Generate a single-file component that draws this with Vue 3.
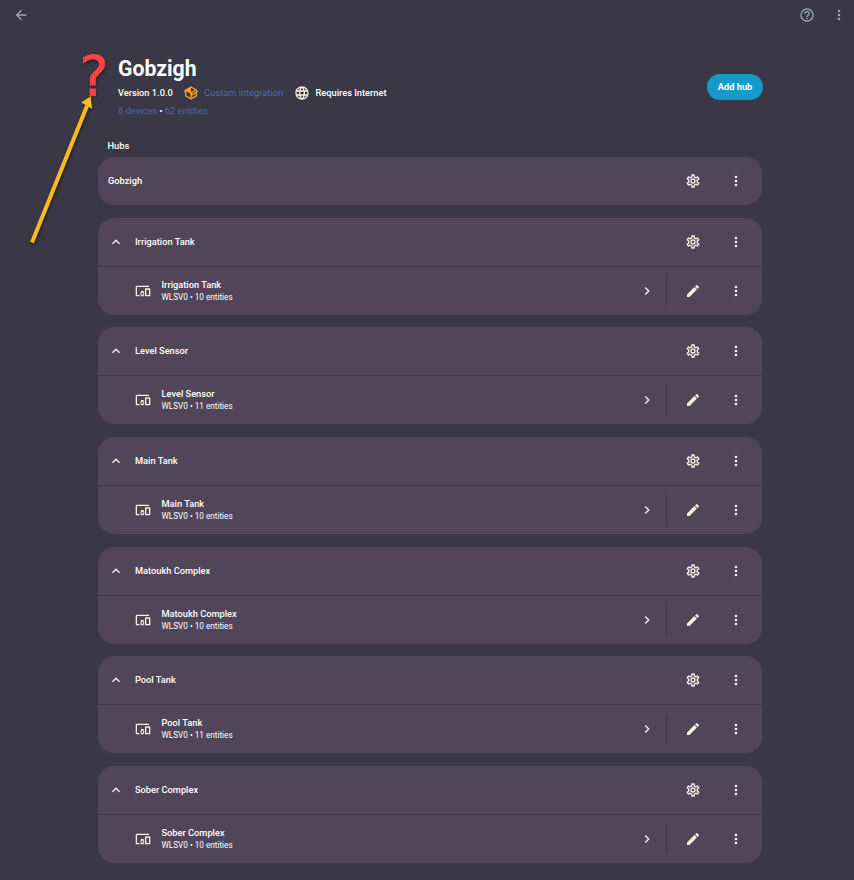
<script setup>
const icons = {
  back: 'M20,11V13H8L13.5,18.5L12.08,19.92L4.16,12L12.08,4.08L13.5,5.5L8,11H20Z',
  help: 'M11,18H13V16H11V18M12,2A10,10 0 0,0 2,12A10,10 0 0,0 12,22A10,10 0 0,0 22,12A10,10 0 0,0 12,2M12,20C7.59,20 4,16.41 4,12C4,7.59 7.59,4 12,4C16.41,4 20,7.59 20,12C20,16.41 16.41,20 12,20M12,6A4,4 0 0,0 8,10H10A2,2 0 0,1 12,8A2,2 0 0,1 14,10C14,12 11,11.75 11,15H13C13,12.75 16,12.5 16,10A4,4 0 0,0 12,6Z',
  dots: 'M12,16A2,2 0 0,1 14,18A2,2 0 0,1 12,20A2,2 0 0,1 10,18A2,2 0 0,1 12,16M12,10A2,2 0 0,1 14,12A2,2 0 0,1 12,14A2,2 0 0,1 10,12A2,2 0 0,1 12,10M12,4A2,2 0 0,1 14,6A2,2 0 0,1 12,8A2,2 0 0,1 10,6A2,2 0 0,1 12,4Z',
  cog: 'M12,8A4,4 0 0,1 16,12A4,4 0 0,1 12,16A4,4 0 0,1 8,12A4,4 0 0,1 12,8M12,10A2,2 0 0,0 10,12A2,2 0 0,0 12,14A2,2 0 0,0 14,12A2,2 0 0,0 12,10M10,22C9.75,22 9.54,21.82 9.5,21.58L9.13,18.93C8.5,18.68 7.96,18.34 7.44,17.94L4.95,18.95C4.73,19.03 4.46,18.95 4.34,18.73L2.34,15.27C2.21,15.05 2.27,14.78 2.46,14.63L4.57,12.97L4.5,12L4.57,11L2.46,9.37C2.27,9.22 2.21,8.95 2.34,8.73L4.34,5.27C4.46,5.05 4.73,4.96 4.95,5.05L7.44,6.05C7.96,5.66 8.5,5.32 9.13,5.07L9.5,2.42C9.54,2.18 9.75,2 10,2H14C14.25,2 14.46,2.18 14.5,2.42L14.87,5.07C15.5,5.32 16.04,5.66 16.56,6.05L19.05,5.05C19.27,4.96 19.54,5.05 19.66,5.27L21.66,8.73C21.79,8.95 21.73,9.22 21.54,9.37L19.43,11L19.5,12L19.43,13L21.54,14.63C21.73,14.78 21.79,15.05 21.66,15.27L19.66,18.73C19.54,18.95 19.27,19.04 19.05,18.95L16.56,17.95C16.04,18.34 15.5,18.68 14.87,18.93L14.5,21.58C14.46,21.82 14.25,22 14,22H10M11.25,4L10.88,6.61C9.68,6.86 8.62,7.5 7.85,8.39L5.44,7.35L4.69,8.65L6.8,10.2C6.4,11.37 6.4,12.64 6.8,13.8L4.68,15.36L5.43,16.66L7.86,15.62C8.63,16.5 9.68,17.14 10.87,17.38L11.24,20H12.76L13.13,17.39C14.32,17.14 15.37,16.5 16.14,15.62L18.57,16.66L19.32,15.36L17.2,13.81C17.6,12.64 17.6,11.37 17.2,10.2L19.31,8.65L18.56,7.35L16.15,8.39C15.38,7.5 14.32,6.86 13.12,6.62L12.75,4H11.25Z',
  pencil: 'M20.71,7.04C21.1,6.65 21.1,6 20.71,5.63L18.37,3.29C18,2.9 17.35,2.9 16.96,3.29L15.12,5.12L18.87,8.87M3,17.25V21H6.75L17.81,9.93L14.06,6.18L3,17.25Z',
  up: 'M7.41,15.41L12,10.83L16.59,15.41L18,14L12,8L6,14L7.41,15.41Z',
  right: 'M8.59,16.58L13.17,12L8.59,7.41L10,6L16,12L10,18L8.59,16.58Z',
  devices: 'M3 6H21V4H3C1.9 4 1 4.9 1 6V18C1 19.1 1.9 20 3 20H7V18H3V6M13 12H9V13.78C8.39 14.33 8 15.11 8 16C8 16.89 8.39 17.67 9 18.22V20H13V18.22C13.61 17.67 14 16.88 14 16S13.61 14.33 13 13.78V12M11 17.5C10.17 17.5 9.5 16.83 9.5 16S10.17 14.5 11 14.5 12.5 15.17 12.5 16 11.83 17.5 11 17.5M22 8H16C15.5 8 15 8.5 15 9V19C15 19.5 15.5 20 16 20H22C22.5 20 23 19.5 23 19V9C23 8.5 22.5 8 22 8M21 18H17V10H21V18Z',
  web: 'M16.36,14C16.44,13.34 16.5,12.68 16.5,12C16.5,11.32 16.44,10.66 16.36,10H19.74C19.9,10.64 20,11.31 20,12C20,12.69 19.9,13.36 19.74,14M14.59,19.56C15.19,18.45 15.65,17.25 15.97,16H18.92C17.96,17.65 16.43,18.93 14.59,19.56M14.34,14H9.66C9.56,13.34 9.5,12.68 9.5,12C9.5,11.32 9.56,10.65 9.66,10H14.34C14.43,10.65 14.5,11.32 14.5,12C14.5,12.68 14.43,13.34 14.34,14M12,19.96C11.17,18.76 10.5,17.43 10.09,16H13.91C13.5,17.43 12.83,18.76 12,19.96M8,8H5.08C6.03,6.34 7.57,5.06 9.4,4.44C8.8,5.55 8.35,6.75 8,8M5.08,16H8C8.35,17.25 8.8,18.45 9.4,19.56C7.57,18.93 6.03,17.65 5.08,16M4.26,14C4.1,13.36 4,12.69 4,12C4,11.31 4.1,10.64 4.26,10H7.64C7.56,10.66 7.5,11.32 7.5,12C7.5,12.68 7.56,13.34 7.64,14M12,4.03C12.83,5.23 13.5,6.57 13.91,8H10.09C10.5,6.57 11.17,5.23 12,4.03M18.92,8H15.97C15.65,6.75 15.19,5.55 14.59,4.44C16.43,5.07 17.96,6.34 18.92,8M12,2C6.47,2 2,6.5 2,12A10,10 0 0,0 12,22A10,10 0 0,0 22,12A10,10 0 0,0 12,2Z',
  box: 'M2,10.96C1.5,10.68 1.35,10.07 1.63,9.59L3.13,7C3.24,6.8 3.41,6.66 3.6,6.58L11.43,2.18C11.59,2.06 11.79,2 12,2C12.21,2 12.41,2.06 12.57,2.18L20.47,6.62C20.66,6.72 20.82,6.88 20.91,7.08L22.36,9.6C22.64,10.08 22.47,10.69 22,10.96L21,11.54V16.5C21,16.88 20.79,17.21 20.47,17.38L12.57,21.82C12.41,21.94 12.21,22 12,22C11.79,22 11.59,21.94 11.43,21.82L3.53,17.38C3.21,17.21 3,16.88 3,16.5V10.96C2.7,11.13 2.32,11.14 2,10.96M12,4.15V4.15L12,10.85V10.85L17.96,7.5L12,4.15M5,15.91L11,19.29V12.58L5,9.21V15.91M19,15.91V12.69L14,15.59C13.67,15.77 13.3,15.76 13,15.6V19.29L19,15.91M13.85,13.36L20.13,9.73L19.55,8.72L13.27,12.35L13.85,13.36Z'
}

const hubs = [
  { name: 'Irrigation Tank', entities: 10 },
  { name: 'Level Sensor', entities: 11 },
  { name: 'Main Tank', entities: 10 },
  { name: 'Matoukh Complex', entities: 10 },
  { name: 'Pool Tank', entities: 11 },
  { name: 'Sober Complex', entities: 10 }
]
</script>

<template>
  <div class="page">
    <nav class="toolbar">
      <svg class="icon" viewBox="0 0 24 24"><path :d="icons.back" /></svg>
      <span class="spacer"></span>
      <svg class="icon" viewBox="0 0 24 24"><path :d="icons.help" /></svg>
      <svg class="icon" viewBox="0 0 24 24"><path :d="icons.dots" /></svg>
    </nav>

    <main class="content">
      <header class="header">
        <div class="info">
          <h1>Gobzigh</h1>
          <div class="meta">
            <span class="version">Version 1.0.0</span>
            <svg class="icon orange" viewBox="0 0 24 24"><path :d="icons.box" /></svg>
            <a class="link custom">Custom integration</a>
            <svg class="icon" viewBox="0 0 24 24"><path :d="icons.web" /></svg>
            <span class="requires">Requires Internet</span>
          </div>
          <div class="counts"><a class="link">6 devices</a> • <a class="link">62 entities</a></div>
        </div>
        <button class="add">Add hub</button>
      </header>

      <h2>Hubs</h2>

      <div class="cards">
        <section class="card">
          <div class="row root">
            <span class="name">Gobzigh</span>
            <span class="spacer"></span>
            <svg class="icon" viewBox="0 0 24 24"><path :d="icons.cog" /></svg>
            <svg class="icon menu" viewBox="0 0 24 24"><path :d="icons.dots" /></svg>
          </div>
        </section>
        <section v-for="hub in hubs" :key="hub.name" class="card">
          <div class="row">
            <svg class="icon" viewBox="0 0 24 24"><path :d="icons.up" /></svg>
            <span class="name entry">{{ hub.name }}</span>
            <span class="spacer"></span>
            <svg class="icon" viewBox="0 0 24 24"><path :d="icons.cog" /></svg>
            <svg class="icon menu" viewBox="0 0 24 24"><path :d="icons.dots" /></svg>
          </div>
          <div class="row device">
            <svg class="icon" viewBox="0 0 24 24"><path :d="icons.devices" /></svg>
            <div class="labels">
              <span class="name">{{ hub.name }}</span>
              <span class="sub">WLSV0 • {{ hub.entities }} entities</span>
            </div>
            <span class="spacer"></span>
            <svg class="icon" viewBox="0 0 24 24"><path :d="icons.right" /></svg>
            <span class="divider"></span>
            <svg class="icon" viewBox="0 0 24 24"><path :d="icons.pencil" /></svg>
            <svg class="icon menu" viewBox="0 0 24 24"><path :d="icons.dots" /></svg>
          </div>
        </section>
      </div>
    </main>

    <div class="question">?</div>
    <svg class="arrow" viewBox="0 0 120 260">
      <path d="M32 242.500L87 106" />
      <polygon points="90.600,96.300 81.200,102.500 92.200,109" />
    </svg>
  </div>
</template>

<style>
body {
  margin: 0;
  background: #3a3747;
}
</style>

<style scoped>
.page {
  position: relative;
  box-sizing: border-box;
  width: 854px;
  height: 880px;
  overflow: hidden;
  background: #3a3747;
  color: #fff;
  font-family: Roboto, "Liberation Sans", sans-serif;
  font-size: 9.25px;
  font-weight: 500;
}
.icon {
  width: 16px;
  height: 16px;
  flex: none;
  fill: #f8efe3;
}
.spacer {
  flex: 1;
}
.toolbar {
  display: flex;
  align-items: center;
  gap: 16px;
  height: 30px;
  padding: 0 7px 0 13px;
}
.toolbar .icon {
  fill: #9aa9bc;
}
.content {
  width: 664px;
  margin-left: 98px;
}
.header {
  display: flex;
  align-items: center;
  justify-content: space-between;
  height: 94px;
  padding-left: 20px;
  box-sizing: border-box;
}
.info {
  padding-top: 21px;
}
h1 {
  margin: 0;
  font-size: 21.2px;
  font-weight: 700;
  line-height: 28px;
}
.meta {
  display: flex;
  align-items: center;
  height: 18px;
  margin-top: 1px;
  white-space: nowrap;
}
.version {
  width: 65px;
}
.version,
.requires,
.custom {
  padding-bottom: 1.500px;
}
.link {
  color: #5268ad;
  font-weight: 400;
  font-size: 9.3px;
}
.custom {
  width: 85px;
  margin: 0 5px;
}
.requires {
  margin-left: 5.500px;
}
.orange {
  fill: #f7a021;
}
.counts {
  height: 18px;
  line-height: 18px;
}
.add {
  width: 56px;
  height: 26px;
  margin-top: 20px;
  margin-right: -1px;
  padding: 0 0 2px;
  border: 0;
  border-radius: 13px;
  background: #169bc8;
  color: #fff;
  font: 700 9.3px Roboto, sans-serif;
}
h2 {
  margin: 14px 0 0 9.500px;
  font-size: 9.3px;
  font-weight: 500;
  line-height: 16px;
}
.cards {
  display: flex;
  flex-direction: column;
  gap: 12.600px;
  padding-top: 3px;
}
.card {
  flex: none;
  border-radius: 16px;
  background: #51455a;
}
.row {
  display: flex;
  align-items: center;
  box-sizing: border-box;
  height: 48px;
  padding: 0 18px 0 10px;
}
.row.root {
  height: 48.200px;
}
.row > .name {
  padding-bottom: 1px;
}
.menu {
  margin-left: 27px;
}
.entry {
  margin-left: 11px;
}
.row.device {
  height: 49px;
  padding-left: 37px;
  border-top: 1px solid #3a3747;
}
.labels {
  display: flex;
  flex-direction: column;
  margin-left: 10.500px;
}
.labels .name {
  line-height: 12px;
}
.sub {
  padding-top: 1px;
  font-size: 8.2px;
  font-weight: 400;
  line-height: 11px;
}
.divider {
  width: 1px;
  height: 33px;
  margin: 0 18px 0 11px;
  background: #3a3747;
}
.question {
  position: absolute;
  left: 79.500px;
  top: 38px;
  color: #ff4244;
  font-family: "DejaVu Sans", sans-serif;
  font-size: 55px;
  font-weight: 400;
  line-height: 76px;
  -webkit-text-stroke: 0.8px #ff4244;
  text-shadow: 1px 2px 3px #24212c;
}
.arrow {
  position: absolute;
  left: 0;
  top: 0;
  width: 120px;
  height: 260px;
  fill: #f9bc20;
  filter: drop-shadow(1px 2px 1.500px #26232d);
}
.arrow path {
  fill: none;
  stroke: #f9bc20;
  stroke-width: 4;
}
</style>
